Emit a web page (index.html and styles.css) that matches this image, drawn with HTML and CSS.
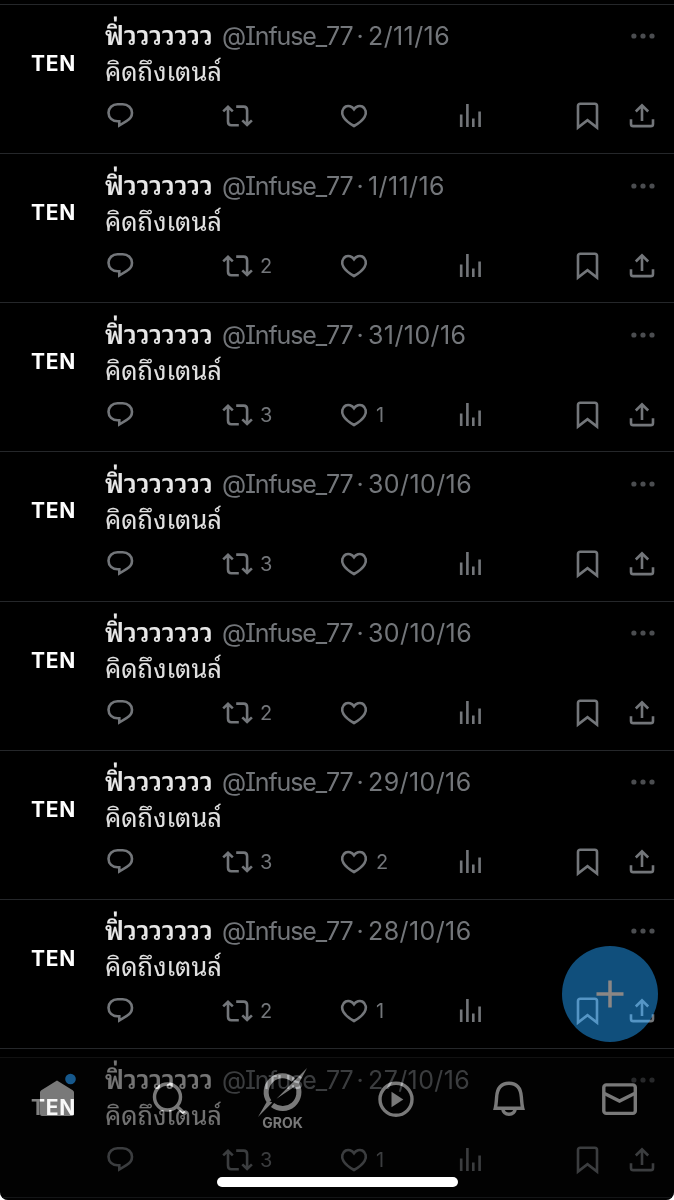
FILE: index.html
```
<!DOCTYPE html>
<html lang="th">
<head>
<meta charset="utf-8">
<title>Timeline</title>
<link rel="stylesheet" href="styles.css">
</head>
<body>
<svg class="sprite" aria-hidden="true">
  <symbol id="reply" viewBox="0 0 30 30"><path d="M11.500 3.300h5.200c5.300 0 9.300 3.700 9.300 8.400 0 3.600-2 6.300-5.200 8.100l-7.500 4.700v-4.200h-1.800c-5.200 0-9-3.800-9-8.500s3.800-8.500 9-8.500z"/></symbol>
  <symbol id="repost" viewBox="0 0 32 30"><path d="M1.200 10.400L6 5.800l4.800 4.600M6 6.500v14c0 2.400 1 3.800 3.400 3.800h7.400M14.200 5.600h7.400c2.400 0 3.500 1.300 3.500 3.700v14.300M20.300 19.400l4.800 4.600 4.800-4.600"/></symbol>
  <symbol id="heart" viewBox="0 0 30 30"><path d="M14 8.200c-2-3-5.800-3.900-8.300-2.700-3.600 1.900-4.600 6.400-2.300 10.400 1.900 3.400 5.500 6.300 10.600 9.100 5.100-2.800 8.700-5.700 10.600-9.100 2.300-4 1.300-8.500-2.300-10.400-2.500-1.200-6.300-.3-8.300 2.700z"/></symbol>
  <symbol id="views" viewBox="0 0 30 30"><path d="M2.200 13.500v12.500M8.400 3v23M14.300 17.500v8.500M20.600 10.500v15.500"/></symbol>
  <symbol id="save" viewBox="0 0 30 30"><path d="M3 26.500V4.900c0-1.300.9-2.200 2.200-2.200h14.600c1.300 0 2.200.9 2.200 2.200v21.600l-9.500-7.300z"/></symbol>
  <symbol id="share" viewBox="0 0 30 30"><path d="M2 18.300v4.600c0 1.400.8 2.200 2.200 2.200h17.600c1.400 0 2.200-.8 2.200-2.200v-4.600M13 20V4.500M6.800 10.500L13 4.300l6.200 6.200"/></symbol>
  <symbol id="more" viewBox="0 0 24 6"><circle cx="2.900" cy="3" r="2.600"/><circle cx="12" cy="3" r="2.600"/><circle cx="21" cy="3" r="2.600"/></symbol>
</svg>
<div class="app">
  <main class="feed">
    <article class="post">
      <div class="avatar">TEN</div>
      <div class="body">
        <header class="head"><b class="name">ฟิ่ววววววว</b><span class="handle">@Infuse_77</span><span class="sep">·</span><time class="date">2/11/16</time><svg class="more"><use href="#more"/></svg></header>
        <p class="text">คิดถึงเตนล์</p>
        <footer class="actions"><span class="act"><svg><use href="#reply"/></svg></span><span class="act"><svg class="wide"><use href="#repost"/></svg></span><span class="act"><svg><use href="#heart"/></svg></span><span class="act"><svg><use href="#views"/></svg></span><span class="act"><svg><use href="#save"/></svg></span><span class="act"><svg><use href="#share"/></svg></span></footer>
      </div>
    </article>
    <article class="post">
      <div class="avatar">TEN</div>
      <div class="body">
        <header class="head"><b class="name">ฟิ่ววววววว</b><span class="handle">@Infuse_77</span><span class="sep">·</span><time class="date">1/11/16</time><svg class="more"><use href="#more"/></svg></header>
        <p class="text">คิดถึงเตนล์</p>
        <footer class="actions"><span class="act"><svg><use href="#reply"/></svg></span><span class="act"><svg class="wide"><use href="#repost"/></svg>2</span><span class="act"><svg><use href="#heart"/></svg></span><span class="act"><svg><use href="#views"/></svg></span><span class="act"><svg><use href="#save"/></svg></span><span class="act"><svg><use href="#share"/></svg></span></footer>
      </div>
    </article>
    <article class="post">
      <div class="avatar">TEN</div>
      <div class="body">
        <header class="head"><b class="name">ฟิ่ววววววว</b><span class="handle">@Infuse_77</span><span class="sep">·</span><time class="date">31/10/16</time><svg class="more"><use href="#more"/></svg></header>
        <p class="text">คิดถึงเตนล์</p>
        <footer class="actions"><span class="act"><svg><use href="#reply"/></svg></span><span class="act"><svg class="wide"><use href="#repost"/></svg>3</span><span class="act"><svg><use href="#heart"/></svg>1</span><span class="act"><svg><use href="#views"/></svg></span><span class="act"><svg><use href="#save"/></svg></span><span class="act"><svg><use href="#share"/></svg></span></footer>
      </div>
    </article>
    <article class="post">
      <div class="avatar">TEN</div>
      <div class="body">
        <header class="head"><b class="name">ฟิ่ววววววว</b><span class="handle">@Infuse_77</span><span class="sep">·</span><time class="date">30/10/16</time><svg class="more"><use href="#more"/></svg></header>
        <p class="text">คิดถึงเตนล์</p>
        <footer class="actions"><span class="act"><svg><use href="#reply"/></svg></span><span class="act"><svg class="wide"><use href="#repost"/></svg>3</span><span class="act"><svg><use href="#heart"/></svg></span><span class="act"><svg><use href="#views"/></svg></span><span class="act"><svg><use href="#save"/></svg></span><span class="act"><svg><use href="#share"/></svg></span></footer>
      </div>
    </article>
    <article class="post">
      <div class="avatar">TEN</div>
      <div class="body">
        <header class="head"><b class="name">ฟิ่ววววววว</b><span class="handle">@Infuse_77</span><span class="sep">·</span><time class="date">30/10/16</time><svg class="more"><use href="#more"/></svg></header>
        <p class="text">คิดถึงเตนล์</p>
        <footer class="actions"><span class="act"><svg><use href="#reply"/></svg></span><span class="act"><svg class="wide"><use href="#repost"/></svg>2</span><span class="act"><svg><use href="#heart"/></svg></span><span class="act"><svg><use href="#views"/></svg></span><span class="act"><svg><use href="#save"/></svg></span><span class="act"><svg><use href="#share"/></svg></span></footer>
      </div>
    </article>
    <article class="post">
      <div class="avatar">TEN</div>
      <div class="body">
        <header class="head"><b class="name">ฟิ่ววววววว</b><span class="handle">@Infuse_77</span><span class="sep">·</span><time class="date">29/10/16</time><svg class="more"><use href="#more"/></svg></header>
        <p class="text">คิดถึงเตนล์</p>
        <footer class="actions"><span class="act"><svg><use href="#reply"/></svg></span><span class="act"><svg class="wide"><use href="#repost"/></svg>3</span><span class="act"><svg><use href="#heart"/></svg>2</span><span class="act"><svg><use href="#views"/></svg></span><span class="act"><svg><use href="#save"/></svg></span><span class="act"><svg><use href="#share"/></svg></span></footer>
      </div>
    </article>
    <article class="post">
      <div class="avatar">TEN</div>
      <div class="body">
        <header class="head"><b class="name">ฟิ่ววววววว</b><span class="handle">@Infuse_77</span><span class="sep">·</span><time class="date">28/10/16</time><svg class="more"><use href="#more"/></svg></header>
        <p class="text">คิดถึงเตนล์</p>
        <footer class="actions"><span class="act"><svg><use href="#reply"/></svg></span><span class="act"><svg class="wide"><use href="#repost"/></svg>2</span><span class="act"><svg><use href="#heart"/></svg>1</span><span class="act"><svg><use href="#views"/></svg></span><span class="act"><svg><use href="#save"/></svg></span><span class="act"><svg><use href="#share"/></svg></span></footer>
      </div>
    </article>
    <article class="post">
      <div class="avatar">TEN</div>
      <div class="body">
        <header class="head"><b class="name">ฟิ่ววววววว</b><span class="handle">@Infuse_77</span><span class="sep">·</span><time class="date">27/10/16</time><svg class="more"><use href="#more"/></svg></header>
        <p class="text">คิดถึงเตนล์</p>
        <footer class="actions"><span class="act"><svg><use href="#reply"/></svg></span><span class="act"><svg class="wide"><use href="#repost"/></svg>3</span><span class="act"><svg><use href="#heart"/></svg>1</span><span class="act"><svg><use href="#views"/></svg></span><span class="act"><svg><use href="#save"/></svg></span><span class="act"><svg><use href="#share"/></svg></span></footer>
      </div>
    </article>
    <div class="rule"></div>
  </main>
  <div class="fab-shade"></div>
  <div class="fab-tint"></div>
  <button class="fab" aria-label="+"><svg viewBox="0 0 28 28"><path d="M14 .5v27M.5 14h27"/></svg></button>
  <div class="nav-shade"></div>
  <nav class="nav">
    <svg class="tab home" viewBox="0 0 44 44"><path class="solid" d="M5 18.500Q5 17 6.300 16.200L22 6.500l15.700 9.700Q39 17 39 18.500V40q0 2-2 2H7q-2 0-2-2z"/><circle class="dot" cx="35.500" cy="5" r="5.300"/></svg>
    <svg class="tab" viewBox="0 0 44 44"><circle cx="19.500" cy="20" r="13"/><path d="M28.700 29.200l9 8.200"/></svg>
    <div class="grok"><svg class="mark" viewBox="0 0 50 50"><path class="ring" d="M11.300 33.800A16.300 16.300 0 0 1 35.300 12"/><path class="ring" d="M38.700 16A16.300 16.300 0 0 1 14.500 37"/><path class="solid" d="M49 0L18.500 30.800 40.500 16zM0 49l9.500-16.500 4.800 2z"/></svg><span>GROK</span></div>
    <svg class="tab" viewBox="0 0 44 44"><circle cx="22" cy="22.300" r="16"/><path class="solid" d="M17.500 14.800v15.500l11.800-7.800z"/></svg>
    <svg class="tab" viewBox="0 0 44 44"><path d="M8.300 31.300c.9-3.200 1-7 1.300-11C10.200 10.800 14.500 6.300 22 6.300s11.800 4.500 12.400 14c.3 4 .4 7.800 1.300 11zM15.500 31.300c.7 4 3.300 6 6.500 6s5.800-2 6.500-6"/></svg>
    <svg class="tab mail" viewBox="0 0 44 44"><rect x="5.800" y="7.900" width="31.500" height="28.500" rx="2.500"/><path d="M6.500 16.500L21.500 24l15-7.500"/></svg>
  </nav>
  <div class="indicator"></div>
</div>
</body>
</html>
```
FILE: styles.css
```
body { margin: 0; background: #fff; }
.sprite { position: absolute; width: 0; height: 0; }
.app {
  position: relative; box-sizing: border-box; width: 674px; height: 1200px; padding-top: 4px;
  overflow: hidden; isolation: isolate; background: #000; border-radius: 0 0 8px 8px;
  font-family: Inter, "Noto Sans Thai Looped", Loma, sans-serif;
  font-feature-settings: "cv08"; color: #73767a;
}
.post { display: flex; box-sizing: border-box; height: 149.150px; border-top: 1px solid #25272a; }
.rule { height: 1px; background: #25272a; }
.avatar { width: 106px; box-sizing: border-box; padding-top: 46px; text-align: center; color: #fff; font-size: 21px; font-weight: 700; line-height: 25px; letter-spacing: .8px; text-indent: 1px; }
.body { flex: 1; padding-top: 13.400px; }
.head { display: flex; align-items: center; height: 36px; font-size: 25px; line-height: 36px; white-space: nowrap; }
.name { width: 116px; margin-left: -1px; margin-right: 1px; font-size: 26px; font-weight: 600; letter-spacing: .1px; color: #e7e7e7; }
.handle { width: 130px; letter-spacing: -1.150px; }
.sep { width: 16px; text-align: center; }
.date { letter-spacing: .4px; }
.more { width: 24px; height: 6px; margin-left: auto; margin-right: 19px; fill: #4b4d50; }
.text { margin: 0 0 0 -1px; height: 36px; font-size: 25.600px; line-height: 36px; color: #e0e0e0; }
.actions { display: grid; grid-template-columns: 116px 118px 119px 116px 54px 30px; height: 30px; margin-top: 11px; }
.act { display: flex; align-items: center; gap: 6px; font-size: 20px; line-height: 30px; }
.act svg { flex: none; width: 30px; height: 30px; fill: none; stroke: #73767a; stroke-width: 2.600; }
.act .wide { width: 32px; }
.fab-shade, .fab-tint, .fab { position: absolute; left: 562px; top: 946px; width: 96px; height: 96px; border-radius: 50%; }
.fab-shade { background: rgba(0, 0, 0, .4); }
.fab-tint { background: #104f7c; mix-blend-mode: plus-lighter; }
.fab { display: grid; place-items: center; padding: 0; border: 0; background: none; }
.fab svg { width: 28px; height: 28px; stroke: #8b8785; stroke-width: 3.500; }
.nav-shade { position: absolute; left: 0; right: 0; top: 1057px; bottom: 0; box-sizing: border-box; border-top: 1px solid #111; background: rgba(3, 3, 3, .5); }
.nav { position: absolute; left: 0; right: 0; top: 1057px; height: 120px; display: grid; grid-template-columns: 113px 113px 113px 113px 113px 109px; justify-items: center; mix-blend-mode: plus-lighter; color: #777; padding-top: 20px; box-sizing: border-box; }
.tab { width: 44px; height: 44px; overflow: visible; fill: none; stroke: #777; stroke-width: 3.400; }
.tab .solid, .mark .solid { fill: #777; stroke: none; }
.ring { fill: none; stroke: #777; stroke-width: 5; }
.home .dot { fill: #14568a; stroke: none; }
.home { margin-top: -3px; }
.grok { display: flex; flex-direction: column; align-items: center; margin-top: -9px; font-size: 14px; font-weight: 700; line-height: 14px; }
.mark { width: 50px; height: 50px; margin-bottom: -2px; }
.indicator { position: absolute; left: 217px; top: 1177px; width: 241px; height: 10px; border-radius: 5px; background: #fff; }
```
